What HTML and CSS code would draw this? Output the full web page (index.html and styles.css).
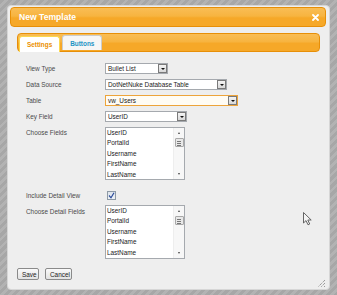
FILE: index.html
```html
<!DOCTYPE html>
<html lang="en">
<head>
  <meta charset="UTF-8" />
  <title>New Template</title>
  <link rel="stylesheet" href="styles.css">
</head>
<body>
  <div class="dialog">
    <div class="titlebar">
      <span class="title">New Template</span>
      <svg class="close" width="7" height="7" viewBox="0 0 7 7">
        <path d="M1 1 L6 6 M6 1 L1 6"></path>
      </svg>
    </div>

    <div class="content">
      <div class="tabs-nav">
        <span class="tab active">Settings</span>
        <span class="tab">Buttons</span>
      </div>

      <div class="form">
        <label class="row-label">View Type</label>
        <div class="select w64"><span class="value">Bullet List</span><span class="arrow"></span></div>

        <label class="row-label">Data Source</label>
        <div class="select w122"><span class="value">DotNetNuke Database Table</span><span class="arrow"></span></div>

        <label class="row-label">Table</label>
        <div class="select w133 focus"><span class="value">vw_Users</span><span class="arrow"></span></div>

        <label class="row-label">Key Field</label>
        <div class="select w82"><span class="value">UserID</span><span class="arrow"></span></div>

        <label class="row-label">Choose Fields</label>
        <div class="listbox">
          <ul class="items">
            <li>UserID</li>
            <li>PortalId</li>
            <li>Username</li>
            <li>FirstName</li>
            <li>LastName</li>
          </ul>
          <div class="scrollbar">
            <span class="up"></span>
            <span class="thumb"></span>
            <span class="down"></span>
          </div>
        </div>

        <label class="row-label check-label">Include Detail View</label>
        <div class="checkbox">
          <svg width="7" height="7" viewBox="0 0 7 7"><path d="M1 3.5 L3 5.8 L6 0.8"></path></svg>
        </div>

        <label class="row-label">Choose Detail Fields</label>
        <div class="listbox detail">
          <ul class="items">
            <li>UserID</li>
            <li>PortalId</li>
            <li>Username</li>
            <li>FirstName</li>
            <li>LastName</li>
          </ul>
          <div class="scrollbar">
            <span class="up"></span>
            <span class="thumb"></span>
            <span class="down"></span>
          </div>
        </div>
      </div>

      <div class="actions">
        <button class="btn save">Save</button>
        <button class="btn cancel">Cancel</button>
      </div>
    </div>

    <svg class="grip" width="9" height="9" viewBox="0 0 9 9">
      <path d="M8 1 L1 8 M8 4 L4 8 M8 7 L7 8"></path>
    </svg>
  </div>

  <svg class="cursor" width="10" height="14" viewBox="0 0 10 14">
    <path d="M0.5 0.5 L0.5 11 L3 8.6 L5 12.8 L6.7 12 L4.8 8 L8.2 8 Z"></path>
  </svg>
</body>
</html>
```

FILE: styles.css
```css
:root {
  --orange: #f6a828;
  --orange-light: #f9bd55;
  --orange-border: #e78f08;
  --panel: #eeeeee;
  --text: #333333;
  --field-border: #a5a9ae;
  --tab-active: #eb8f00;
  --tab-default: #1c94c4;
}

body {
  margin: 0;
  width: 337px;
  height: 295px;
  overflow: hidden;
  position: relative;
  font-family: "Liberation Sans", Arial, sans-serif;
  font-size: 6.4px;
  color: var(--text);
  background: repeating-linear-gradient(135deg, #a7a7a7 0 3px, #b3b3b3 3px 5.7px);
}

.dialog {
  position: relative;
  box-sizing: border-box;
  width: 323px;
  height: 285px;
  margin: 5px 0 0 7px;
  padding: 1px 3px 0 2px;
  background: var(--panel);
  border: 1px solid #d6d6d6;
  border-radius: 4px;
}

.titlebar {
  box-sizing: border-box;
  height: 20px;
  display: flex;
  align-items: center;
  justify-content: space-between;
  padding: 0 6px 0 8px;
  border: 1px solid var(--orange-border);
  border-radius: 4px;
  background: linear-gradient(to bottom, var(--orange-light) 0%, #f7b440 45%, var(--orange) 55%, var(--orange) 100%);
}

.title {
  color: #ffffff;
  font-weight: bold;
  font-size: 8.6px;
}

.close path {
  stroke: #ffffff;
  stroke-width: 1.8;
  stroke-linecap: round;
}

.content {
  padding: 6px 6px 0 7px;
}

.tabs-nav {
  box-sizing: border-box;
  height: 19px;
  display: flex;
  align-items: flex-end;
  gap: 2px;
  padding: 0 0 0 1px;
  border: 1px solid var(--orange-border);
  border-radius: 4px;
  background: linear-gradient(to bottom, var(--orange-light) 0%, #f7b440 45%, var(--orange) 55%, var(--orange) 100%);
}

.tab {
  box-sizing: border-box;
  height: 15px;
  display: flex;
  align-items: center;
  padding: 0 7px 0 7px;
  margin-bottom: 1px;
  font-weight: bold;
  color: var(--tab-default);
  background: #f6f6f6;
  border: 1px solid #cccccc;
  border-bottom: none;
  border-radius: 3px 3px 0 0;
}

.tab.active {
  height: 16px;
  margin-bottom: -1px;
  color: var(--tab-active);
  background: #ffffff;
  border-color: #fbd850;
}

.form {
  display: grid;
  grid-template-columns: 79px auto;
  row-gap: 5px;
  justify-items: start;
  padding: 11px 0 0 9px;
}

.row-label {
  line-height: 11px;
  color: #4a4a4a;
}

.select {
  box-sizing: border-box;
  height: 11px;
  display: flex;
  align-items: stretch;
  background: #ffffff;
  border: 1px solid var(--field-border);
}

.select .value {
  flex: 1;
  padding-left: 2px;
  line-height: 9px;
  color: #222222;
  white-space: nowrap;
  overflow: hidden;
}

.select .arrow {
  box-sizing: border-box;
  width: 9px;
  margin: 0 0 0 1px;
  border: 1px solid #7a7a7a;
  background: linear-gradient(to bottom, #f4f4f4, #d8d8d8);
  display: flex;
  align-items: center;
  justify-content: center;
}

.select .arrow::after {
  content: "";
  border-left: 2px solid transparent;
  border-right: 2px solid transparent;
  border-top: 2px solid #111111;
}

.w64 { width: 63px; }
.w122 { width: 122px; }
.w133 { width: 133px; }
.w82 { width: 82px; }

.select.focus {
  border-color: #eda43a;
  background: #fffcf4;
}

.listbox {
  box-sizing: border-box;
  width: 80px;
  height: 53px;
  display: flex;
  background: #ffffff;
  border: 1px solid var(--field-border);
}

.listbox.detail {
  height: 54px;
  margin-top: -1px;
}

.items {
  flex: 1;
  list-style: none;
  margin: 0;
  padding: 0 0 0 1px;
}

.items li {
  line-height: 10.4px;
  color: #222222;
}

.scrollbar {
  width: 10px;
  display: flex;
  flex-direction: column;
  align-items: center;
  background: #f7f7f7;
  border-left: 1px solid #eeeeee;
}

.scrollbar .up,
.scrollbar .down {
  height: 10px;
  display: flex;
  align-items: center;
}

.scrollbar .up::after {
  content: "";
  border-left: 1.5px solid transparent;
  border-right: 1.5px solid transparent;
  border-bottom: 2px solid #444444;
}

.scrollbar .down {
  margin-top: auto;
}

.scrollbar .down::after {
  content: "";
  border-left: 1.5px solid transparent;
  border-right: 1.5px solid transparent;
  border-top: 2px solid #444444;
}

.scrollbar .thumb {
  box-sizing: border-box;
  width: 9px;
  height: 9px;
  border: 1px solid #a8a8a8;
  border-radius: 1px;
  background:
    linear-gradient(#777777, #777777) center 2px / 4px 1px no-repeat,
    linear-gradient(#777777, #777777) center 4px / 4px 1px no-repeat,
    linear-gradient(#777777, #777777) center 6px / 4px 1px no-repeat,
    #e8e8e8;
}

.check-label {
  margin-top: 5px;
}

.checkbox {
  box-sizing: border-box;
  width: 9px;
  height: 9px;
  margin: 6px 0 0 2px;
  display: flex;
  align-items: center;
  justify-content: center;
  border: 1px solid #8e9aa6;
  background: linear-gradient(to bottom, #dde4ec, #eef2f6);
}

.checkbox path {
  fill: none;
  stroke: #2a4a9a;
  stroke-width: 1.2;
}

.actions {
  display: flex;
  gap: 6px;
  padding-top: 9px;
}

.btn {
  box-sizing: border-box;
  height: 12px;
  padding: 0 4px;
  font-family: "Liberation Sans", Arial, sans-serif;
  font-size: 6.4px;
  color: #222222;
  border: 1px solid #8a8a8a;
  border-radius: 2px;
  background: linear-gradient(to bottom, #fafafa, #e2e2e2);
}

.save { width: 22px; }
.cancel { width: 27px; }

.grip {
  position: absolute;
  right: 3px;
  bottom: 1px;
}

.grip path {
  stroke: #777777;
  stroke-width: 1;
  stroke-dasharray: 1 1;
}

.cursor {
  position: absolute;
  left: 303px;
  top: 212px;
}

.cursor path {
  fill: #f4f4f4;
  stroke: #555555;
  stroke-width: 0.9;
}
```
